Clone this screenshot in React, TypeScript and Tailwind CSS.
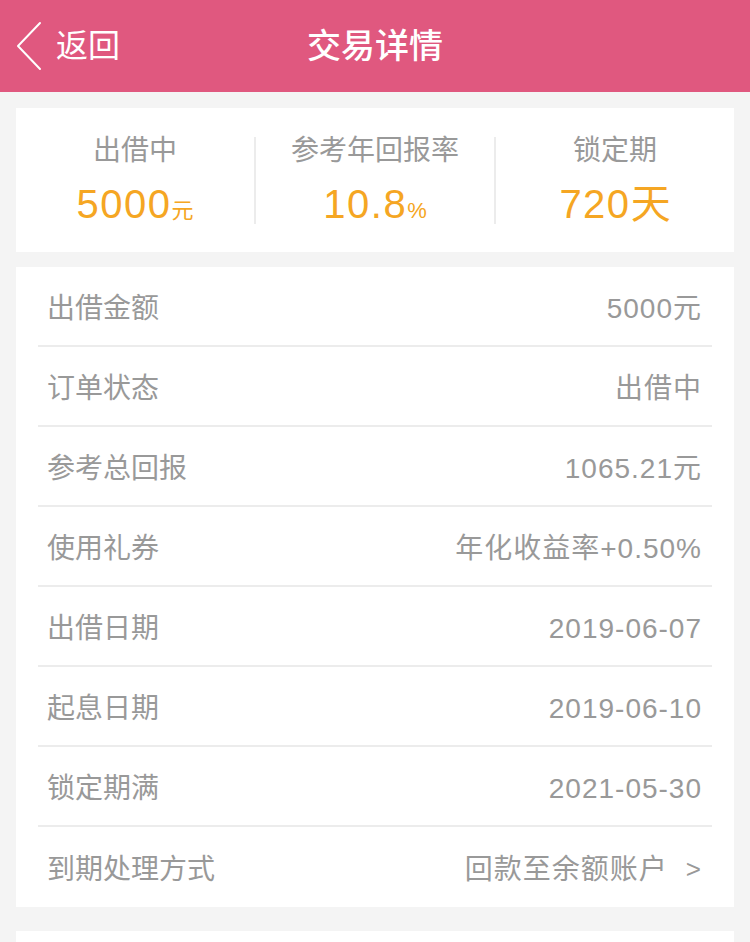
import React from 'react';

const FONT = '"Liberation Sans", "Noto Sans CJK SC", sans-serif';

const rows: { label: string; value: string; arrow?: boolean }[] = [
  { label: '出借金额', value: '5000元' },
  { label: '订单状态', value: '出借中' },
  { label: '参考总回报', value: '1065.21元' },
  { label: '使用礼券', value: '年化收益率+0.50%' },
  { label: '出借日期', value: '2019-06-07' },
  { label: '起息日期', value: '2019-06-10' },
  { label: '锁定期满', value: '2021-05-30' },
  { label: '到期处理方式', value: '回款至余额账户', arrow: true },
];

function Stat({ label, value, unit, unitBig }: { label: string; value: string; unit: string; unitBig?: boolean }) {
  return (
    <div className="flex-1 flex flex-col items-center">
      <div className="text-[28px] leading-none text-[#999999]">{label}</div>
      <div className="mt-[19px] leading-none text-[#f5a623] flex items-baseline">
        <span className="text-[40px] tracking-[1.5px]">{value}</span>
        <span className={unitBig ? 'text-[40px]' : 'text-[22px]'}>{unit}</span>
      </div>
    </div>
  );
}

export default function App() {
  return (
    <div className="min-h-screen bg-[#f4f4f4]" style={{ fontFamily: FONT }}>
      <div className="relative h-[92px] bg-[#e0587f] flex items-center justify-center">
        <div className="absolute left-0 top-0 h-full flex items-center pl-[16px]">
          <svg width="26" height="50" viewBox="0 0 26 50" fill="none">
            <polyline points="24,2 2,25 24,48" stroke="white" strokeWidth="2" strokeLinecap="round" strokeLinejoin="round" />
          </svg>
          <span className="ml-[14px] text-[32px] text-white">返回</span>
        </div>
        <span className="text-[34px] font-medium text-white">交易详情</span>
      </div>

      <div className="px-4 pt-4">
        <div className="bg-white h-[144px] flex items-center">
          <Stat label="出借中" value="5000" unit="元" />
          <div className="w-[2px] h-[87px] bg-[#ececec]" />
          <Stat label="参考年回报率" value="10.8" unit="%" />
          <div className="w-[2px] h-[87px] bg-[#ececec]" />
          <Stat label="锁定期" value="720" unit="天" unitBig />
        </div>

        <div className="mt-[15px] bg-white px-[22px]">
          {rows.map((r, i) => (
            <div
              key={r.label}
              className={`h-[80px] flex items-center justify-between pt-[5px] pl-[9px] pr-[10px] ${i < rows.length - 1 ? 'border-b-2 border-[#ececec]' : ''}`}
            >
              <span className="text-[28px] text-[#999999]">{r.label}</span>
              <span className="text-[28px] tracking-[1px] text-[#999999] flex items-center">
                {r.value}
                {r.arrow && <span className="ml-[18px] text-[26px]">&gt;</span>}
              </span>
            </div>
          ))}
        </div>

        <div className="mt-[24px] bg-white h-[120px]" />
      </div>
    </div>
  );
}
